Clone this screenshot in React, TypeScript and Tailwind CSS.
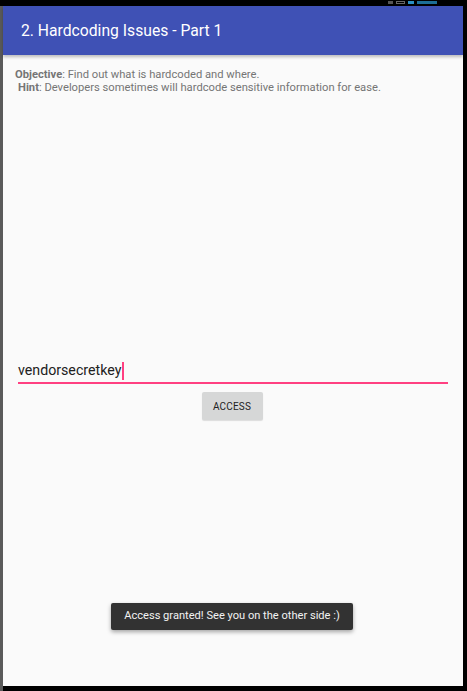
export default function App() {
  return (
    <div className="flex h-[691px] w-[467px] flex-col bg-black font-['Roboto',sans-serif]">
      <div className="flex h-[6px] shrink-0 items-start justify-end gap-[3px] pr-[30px]">
        <div className="mt-[1px] h-[3px] w-[5px] bg-[#555]" />
        <div className="mt-[1px] h-[3px] w-[9px] border border-[#666]" />
        <div className="mt-[1px] h-[3px] w-[6px] bg-[#2b8fc2]" />
        <div className="mt-[1px] h-[3px] w-[20px] bg-[#1d6e96]" />
      </div>
      <div className="flex min-h-0 flex-1">
        <div className="w-[3px] shrink-0 bg-[#5a5a5a]" />
        <div className="flex h-[680px] w-[460px] flex-col bg-[#fafafa]">
          <div className="relative flex h-[49px] shrink-0 items-center bg-[#3f51b5] pl-[18px] pt-[1px] shadow-[0_2px_3px_rgba(0,0,0,0.25)]">
            <span className="text-[15.7px] text-white">2. Hardcoding Issues - Part 1</span>
          </div>
          <div className="pl-[12px] pt-[13px] text-[11.2px] leading-[13px] text-[#757575]">
            <div>
              <span className="font-bold">Objective</span>: Find out what is hardcoded and where.
            </div>
            <div className="pl-[3px]">
              <span className="font-bold">Hint</span>: Developers sometimes will hardcode sensitive information for ease.
            </div>
          </div>
          <div className="mx-[15px] mt-[264px] flex h-[26px] items-end border-b-2 border-[#ff4081]">
            <span className="pb-[3px] text-[14.2px] leading-[18px] text-[#212121]">vendorsecretkey</span>
            <span className="mb-[2px] ml-[1px] h-[18px] w-[2px] bg-[#ff4081]" />
          </div>
          <div className="mt-[8px] flex justify-center pr-[2px]">
            <div className="flex h-[28px] w-[61px] items-center justify-center rounded-[2px] bg-[#d6d7d7] text-[10px] tracking-[0.2px] text-[#222] shadow-[0_1px_1px_rgba(0,0,0,0.12)]">
              ACCESS
            </div>
          </div>
          <div className="mt-[183px] flex justify-center pr-[2px]">
            <div className="flex h-[27px] items-center rounded-[2px] bg-[#323232] px-[13px] text-[11.1px] text-[#f2f2f2] shadow-[0_2px_4px_rgba(0,0,0,0.35)]">
              Access granted! See you on the other side :)
            </div>
          </div>
        </div>
        <div className="flex-1 bg-black" />
      </div>
    </div>
  )
}
